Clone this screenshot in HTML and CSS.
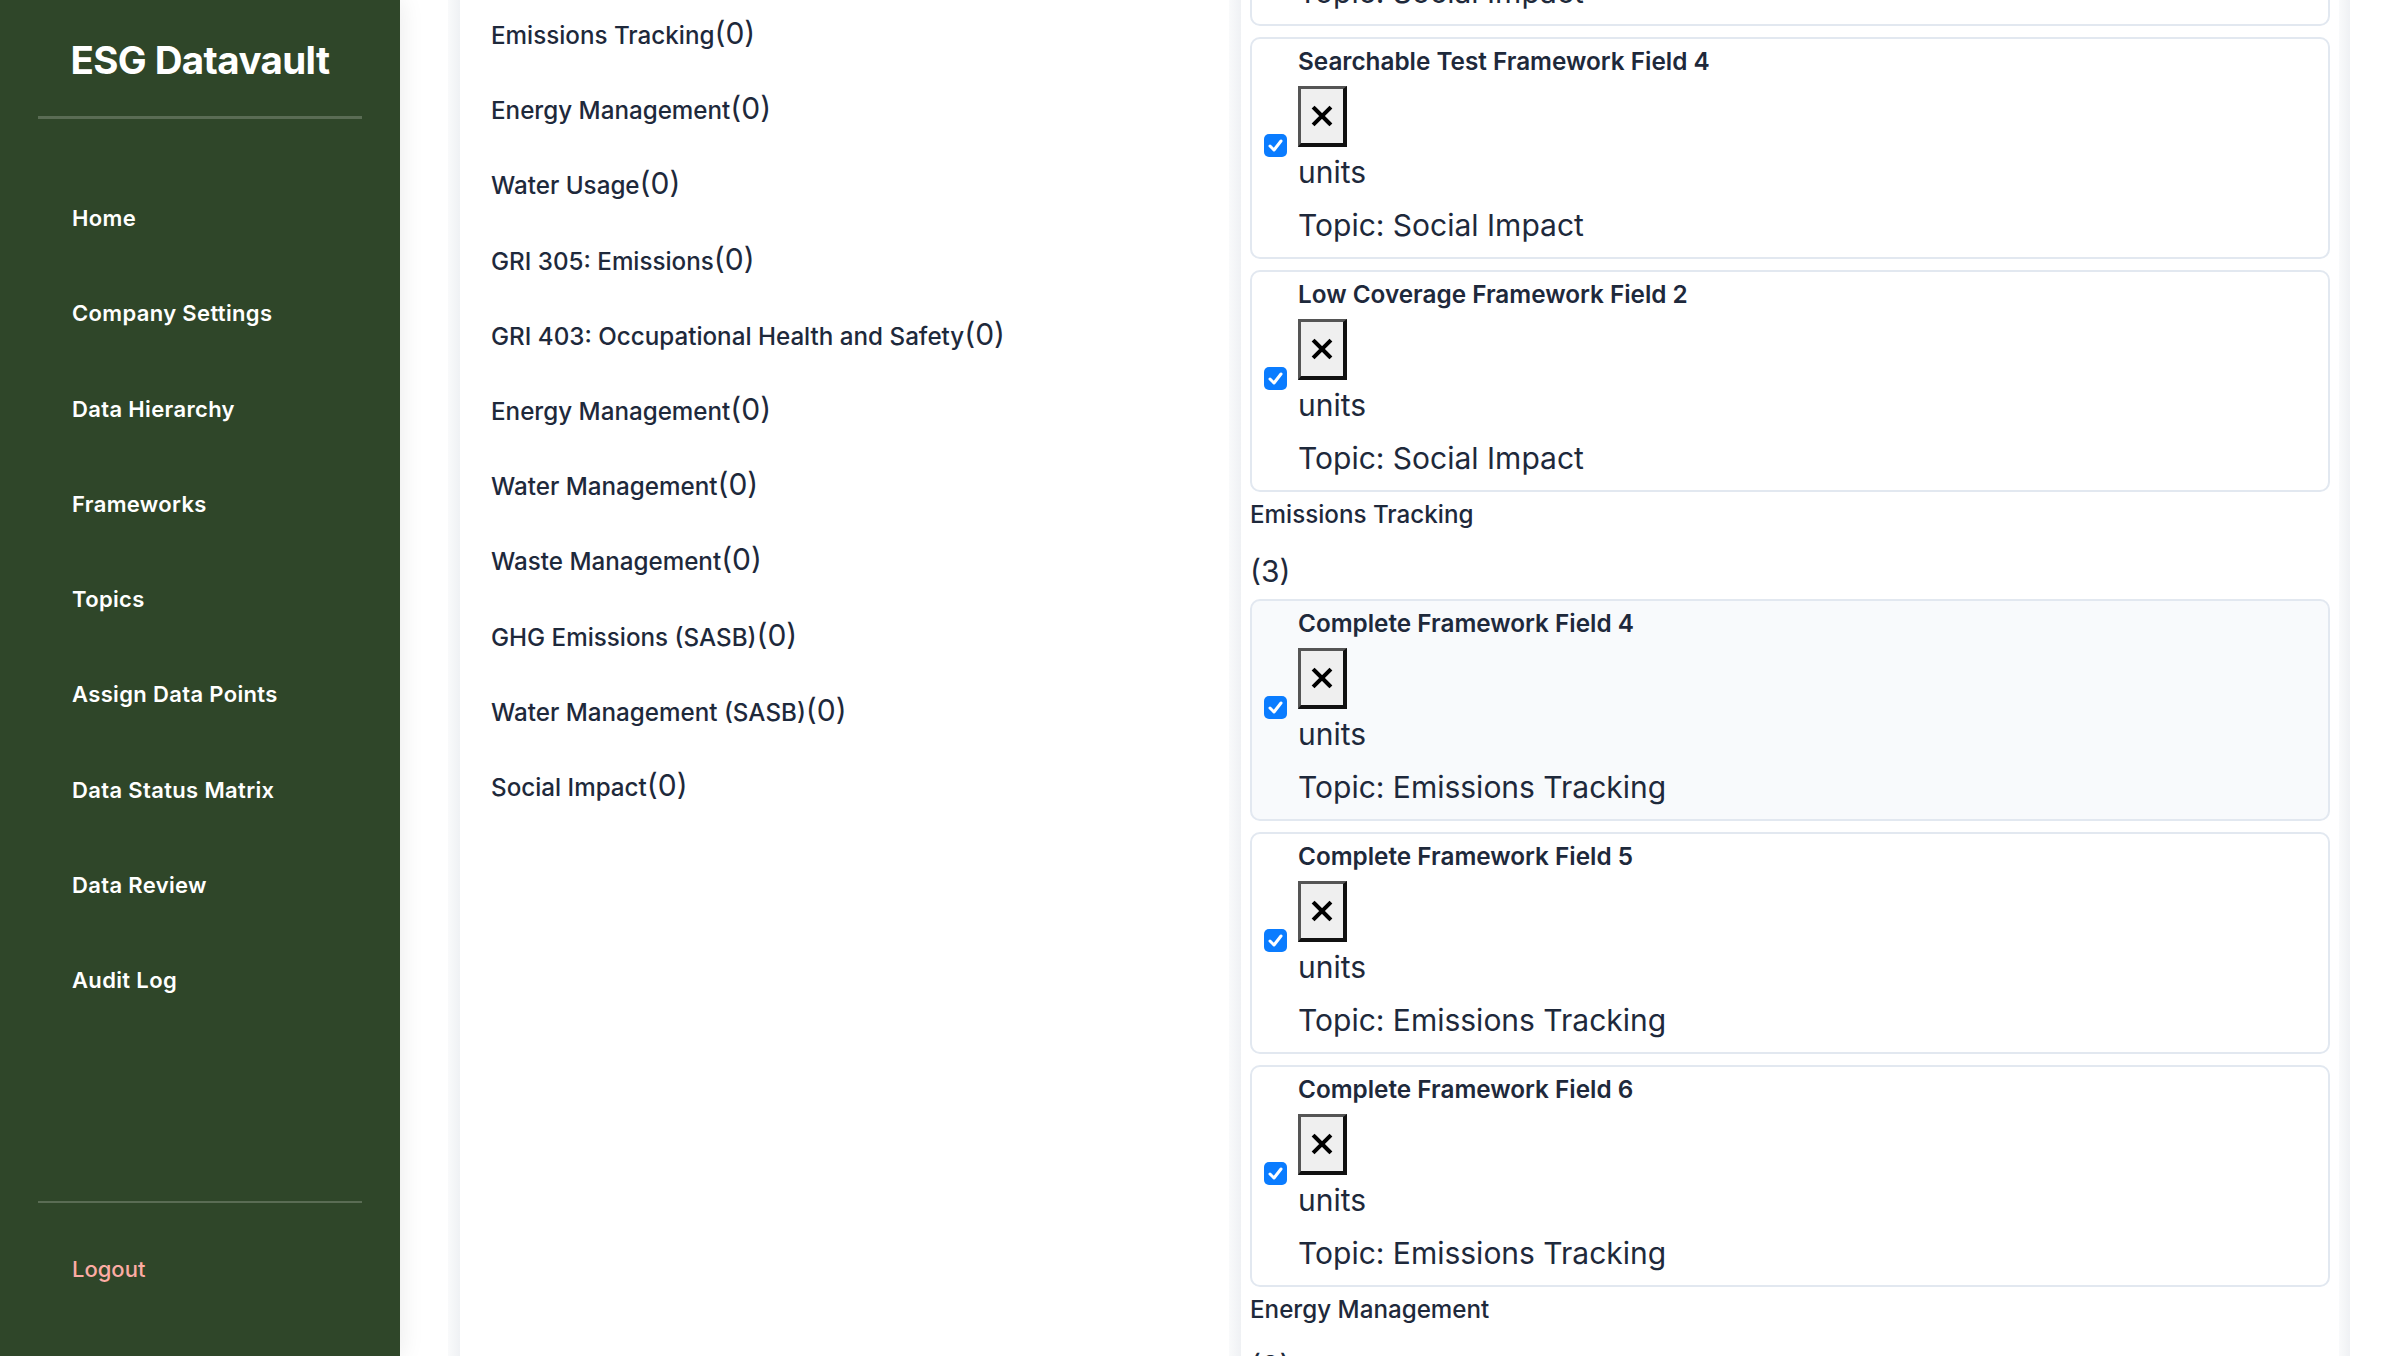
FILE: index.html
```html
<!DOCTYPE html>
<html lang="en">
<head>
<meta charset="utf-8">
<title>ESG Datavault</title>
<link rel="stylesheet" href="styles.css">
</head>
<body>
<div class="app">
  <aside class="sidebar">
    <div class="brand">ESG Datavault</div>
    <div class="rule"></div>
    <nav class="nav">
      <a href="#">Home</a>
      <a href="#">Company Settings</a>
      <a href="#">Data Hierarchy</a>
      <a href="#">Frameworks</a>
      <a href="#">Topics</a>
      <a href="#">Assign Data Points</a>
      <a href="#">Data Status Matrix</a>
      <a href="#">Data Review</a>
      <a href="#">Audit Log</a>
    </nav>
    <div class="foot"><a class="logout" href="#">Logout</a></div>
  </aside>

  <main class="main">
    <div class="strip"></div>
    <section class="topics">
      <ul>
        <li><span class="topic-name">Emissions Tracking</span><span class="count">(0)</span></li>
        <li><span class="topic-name">Energy Management</span><span class="count">(0)</span></li>
        <li><span class="topic-name">Water Usage</span><span class="count">(0)</span></li>
        <li><span class="topic-name">GRI 305: Emissions</span><span class="count">(0)</span></li>
        <li><span class="topic-name">GRI 403: Occupational Health and Safety</span><span class="count">(0)</span></li>
        <li><span class="topic-name">Energy Management</span><span class="count">(0)</span></li>
        <li><span class="topic-name">Water Management</span><span class="count">(0)</span></li>
        <li><span class="topic-name">Waste Management</span><span class="count">(0)</span></li>
        <li><span class="topic-name">GHG Emissions (SASB)</span><span class="count">(0)</span></li>
        <li><span class="topic-name">Water Management (SASB)</span><span class="count">(0)</span></li>
        <li><span class="topic-name">Social Impact</span><span class="count">(0)</span></li>
      </ul>
    </section>
    <div class="strip"></div>
    <section class="fields">
      <div class="card ghost">
        <span class="check"><svg viewBox="0 0 23 23" width="23" height="23"><path d="M6 12 L10 16 L17 7" fill="none" stroke="#fff" stroke-width="3" stroke-linecap="round" stroke-linejoin="round"/></svg></span>
        <div class="card-body">
          <div class="card-title">Searchable Test Framework Field 3</div>
          <span class="broken"><svg viewBox="0 0 22 22" width="22" height="22"><path d="M3.5 3.5 L18.5 18.5 M18.5 3.5 L3.5 18.5" stroke="#000" stroke-width="4" stroke-linecap="square"/></svg></span>
          <div class="unit">units</div>
          <div class="topic">Topic: Social Impact</div>
        </div>
      </div>
      <div class="card">
        <span class="check"><svg viewBox="0 0 23 23" width="23" height="23"><path d="M6 12 L10 16 L17 7" fill="none" stroke="#fff" stroke-width="3" stroke-linecap="round" stroke-linejoin="round"/></svg></span>
        <div class="card-body">
          <div class="card-title">Searchable Test Framework Field 4</div>
          <span class="broken"><svg viewBox="0 0 22 22" width="22" height="22"><path d="M3.5 3.5 L18.5 18.5 M18.5 3.5 L3.5 18.5" stroke="#000" stroke-width="4" stroke-linecap="square"/></svg></span>
          <div class="unit">units</div>
          <div class="topic">Topic: Social Impact</div>
        </div>
      </div>
      <div class="card">
        <span class="check"><svg viewBox="0 0 23 23" width="23" height="23"><path d="M6 12 L10 16 L17 7" fill="none" stroke="#fff" stroke-width="3" stroke-linecap="round" stroke-linejoin="round"/></svg></span>
        <div class="card-body">
          <div class="card-title">Low Coverage Framework Field 2</div>
          <span class="broken"><svg viewBox="0 0 22 22" width="22" height="22"><path d="M3.5 3.5 L18.5 18.5 M18.5 3.5 L3.5 18.5" stroke="#000" stroke-width="4" stroke-linecap="square"/></svg></span>
          <div class="unit">units</div>
          <div class="topic">Topic: Social Impact</div>
        </div>
      </div>

      <div class="group-name">Emissions Tracking</div>
      <div class="group-count">(3)</div>
      <div class="card hl">
        <span class="check"><svg viewBox="0 0 23 23" width="23" height="23"><path d="M6 12 L10 16 L17 7" fill="none" stroke="#fff" stroke-width="3" stroke-linecap="round" stroke-linejoin="round"/></svg></span>
        <div class="card-body">
          <div class="card-title">Complete Framework Field 4</div>
          <span class="broken"><svg viewBox="0 0 22 22" width="22" height="22"><path d="M3.5 3.5 L18.5 18.5 M18.5 3.5 L3.5 18.5" stroke="#000" stroke-width="4" stroke-linecap="square"/></svg></span>
          <div class="unit">units</div>
          <div class="topic">Topic: Emissions Tracking</div>
        </div>
      </div>
      <div class="card">
        <span class="check"><svg viewBox="0 0 23 23" width="23" height="23"><path d="M6 12 L10 16 L17 7" fill="none" stroke="#fff" stroke-width="3" stroke-linecap="round" stroke-linejoin="round"/></svg></span>
        <div class="card-body">
          <div class="card-title">Complete Framework Field 5</div>
          <span class="broken"><svg viewBox="0 0 22 22" width="22" height="22"><path d="M3.5 3.5 L18.5 18.5 M18.5 3.5 L3.5 18.5" stroke="#000" stroke-width="4" stroke-linecap="square"/></svg></span>
          <div class="unit">units</div>
          <div class="topic">Topic: Emissions Tracking</div>
        </div>
      </div>
      <div class="card">
        <span class="check"><svg viewBox="0 0 23 23" width="23" height="23"><path d="M6 12 L10 16 L17 7" fill="none" stroke="#fff" stroke-width="3" stroke-linecap="round" stroke-linejoin="round"/></svg></span>
        <div class="card-body">
          <div class="card-title">Complete Framework Field 6</div>
          <span class="broken"><svg viewBox="0 0 22 22" width="22" height="22"><path d="M3.5 3.5 L18.5 18.5 M18.5 3.5 L3.5 18.5" stroke="#000" stroke-width="4" stroke-linecap="square"/></svg></span>
          <div class="unit">units</div>
          <div class="topic">Topic: Emissions Tracking</div>
        </div>
      </div>

      <div class="group-name">Energy Management</div>
      <div class="group-count">(3)</div>
    </section>
    <div class="strip thin"></div>
  </main>
</div>
</body>
</html>
```

FILE: styles.css
```css
html, body {
  margin: 0;
  padding: 0;
  height: 100%;
}

body {
  font-family: Inter, "Noto Sans", sans-serif;
  color: #1e293b;
  background: #ffffff;
  overflow: hidden;
}

.app {
  display: flex;
  height: 100vh;
  overflow: hidden;
}

/* Sidebar */
.sidebar {
  width: 400px;
  flex: none;
  box-sizing: border-box;
  background: #2f4629;
  display: flex;
  flex-direction: column;
  padding: 37px 38px 0;
  box-shadow: 2px 0 22px rgba(0, 0, 0, 0.08);
  z-index: 1;
}

.brand {
  font-weight: 700;
  font-size: 38.5px;
  line-height: 47px;
  color: #ffffff;
  text-align: center;
  letter-spacing: -0.6px;
}

.rule {
  height: 3px;
  background: #5a6c54;
  margin-top: 32px;
}

.nav {
  margin-top: 52px;
  display: flex;
  flex-direction: column;
}

.nav a {
  display: block;
  padding: 35px 0 35px 34px;
  line-height: 25.3px;
  font-weight: 600;
  font-size: 22px;
  letter-spacing: 0.35px;
  color: #ffffff;
  text-decoration: none;
}

.foot {
  margin-top: auto;
  border-top: 2px solid #5a6c54;
  padding: 51px 0 72px 34px;
}

.logout {
  display: inline-block;
  font-size: 22px;
  font-weight: 500;
  line-height: 30px;
  color: #fcaca4;
  text-decoration: none;
}

/* Main */
.main {
  flex: 1;
  min-width: 0;
  display: flex;
  padding-left: 48px;
}

.strip {
  width: 12px;
  flex: none;
  background: linear-gradient(90deg, #f9fafb, #eff1f4);
}

.strip.thin {
  width: 11px;
}

.topics {
  width: 769px;
  flex: none;
  box-sizing: border-box;
  padding: 11px 0 0 31px;
  font-size: 30px;
  line-height: 45px;
}

.topics ul {
  list-style: none;
  margin: 0;
  padding: 0;
}

.topics li {
  height: 45px;
  margin-bottom: 30.2px;
  white-space: nowrap;
}

.topic-name {
  font-size: 24.2px;
  font-weight: 500;
}

.count {
  font-size: 30px;
  font-weight: 400;
}

.fields {
  width: 1098px;
  flex: none;
  box-sizing: border-box;
  padding: 0 9px;
}

.card {
  display: flex;
  align-items: center;
  gap: 11px;
  height: 222px;
  box-sizing: border-box;
  border: 2px solid #e2e8f0;
  border-radius: 10px;
  padding: 4px 14px 9px 12px;
  background: #ffffff;
}

.card + .card {
  margin-top: 11px;
}

.card.ghost {
  margin-top: -196px;
}

.card.hl {
  background: #f8fafc;
}

.check {
  width: 23px;
  height: 23px;
  flex: none;
  border-radius: 5px;
  background: #0a7cff;
  display: flex;
  align-items: center;
  justify-content: center;
}

.check svg {
  display: block;
}

.card-body {
  display: flex;
  flex-direction: column;
  align-items: flex-start;
}

.card-title {
  font-size: 24.3px;
  font-weight: 600;
  line-height: 36px;
}

.broken {
  margin-top: 7px;
  width: 49px;
  height: 61px;
  box-sizing: border-box;
  border-style: solid;
  border-width: 3px 4px 4px 3px;
  border-color: #555555 #111111 #111111 #555555;
  background: #efefef;
  display: flex;
  align-items: center;
  justify-content: center;
}

.broken svg {
  display: block;
}

.unit {
  margin-top: 3px;
  font-size: 30px;
  line-height: 45px;
}

.topic {
  margin-top: 8px;
  font-size: 30px;
  line-height: 45px;
}

.group-name {
  margin-top: 4px;
  font-size: 24.2px;
  font-weight: 500;
  line-height: 37.5px;
}

.group-count {
  margin-top: 15px;
  margin-bottom: 5.5px;
  font-size: 30px;
  line-height: 45px;
}
```
